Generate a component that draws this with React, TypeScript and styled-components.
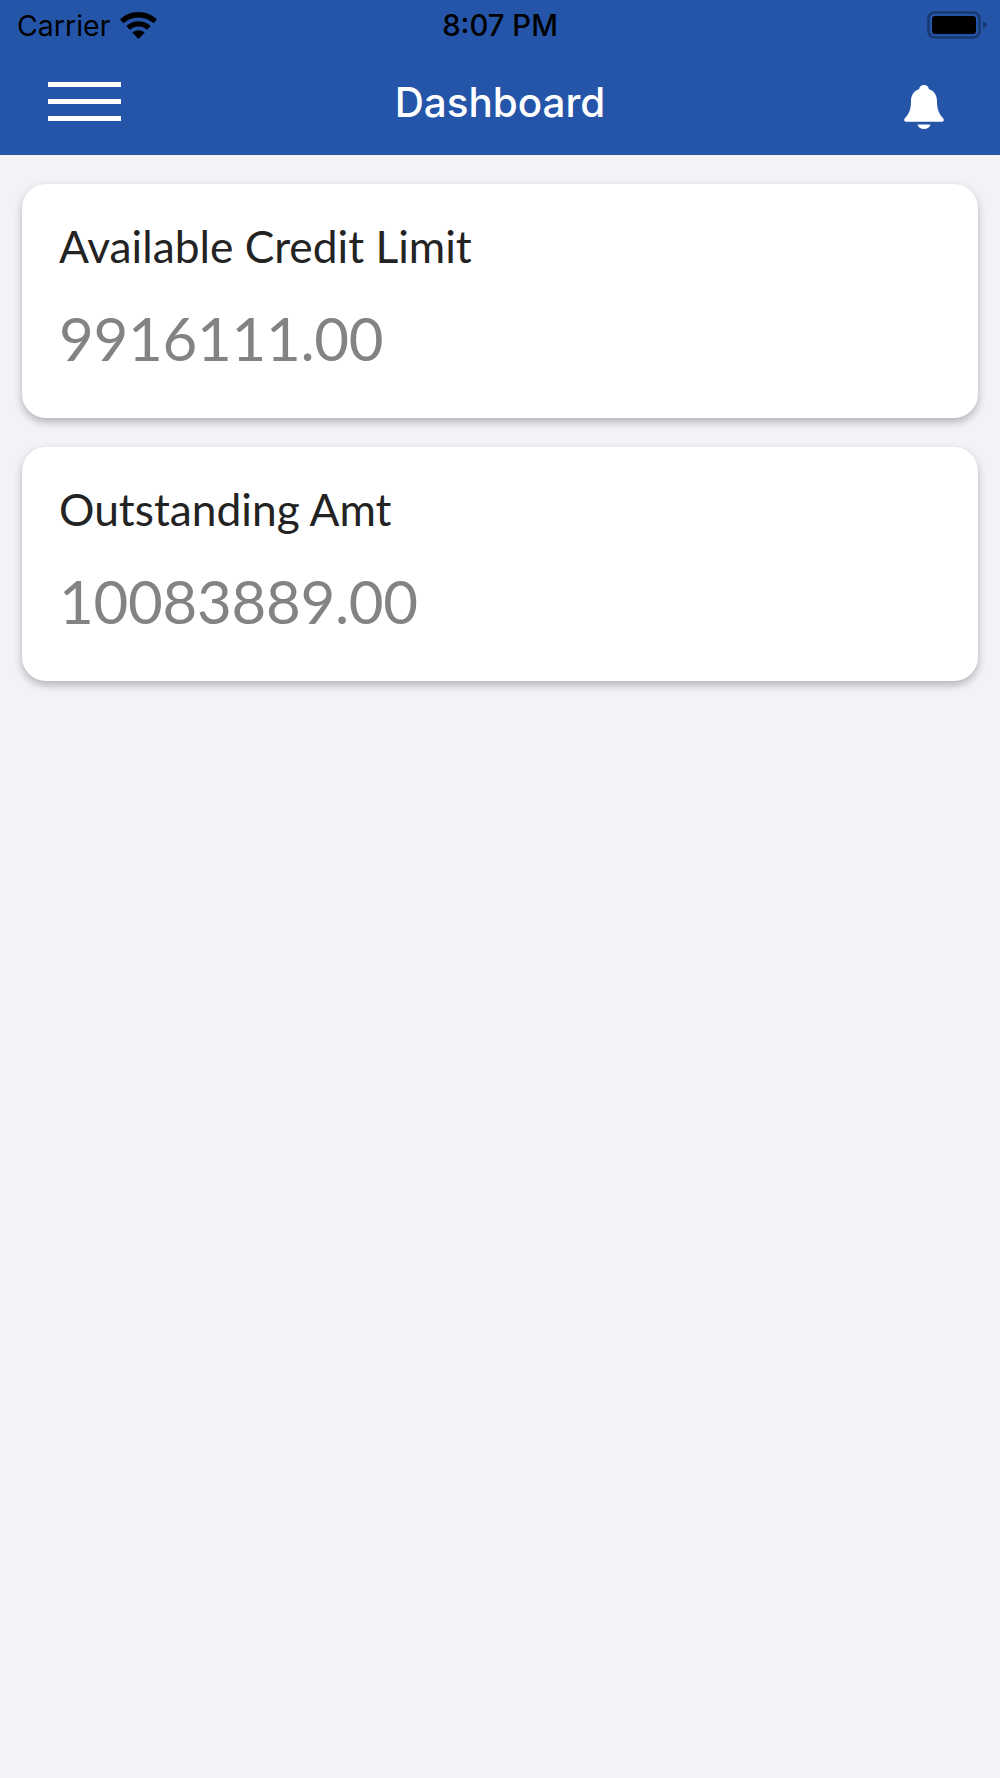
import { createGlobalStyle } from "styled-components"
import styled from "styled-components"

const GlobalStyle = createGlobalStyle`
  html, body {
    margin: 0;
    padding: 0;
    background: #f2f2f7;
  }
`;

const Page = styled.div`
  width: 1000px;
  height: 1778px;
  background: #f2f2f7;
  overflow: hidden;
`;

const Header = styled.header`
  height: 155px;
  background: #2455a9;
  display: flex;
  flex-direction: column;
`;

const StatusBar = styled.div`
  height: 50px;
  display: grid;
  grid-template-columns: 1fr auto 1fr;
  align-items: center;
  padding: 0 13px 0 17px;
  color: #000;
  font-family: Inter, "Liberation Sans", sans-serif;
`;

const Carrier = styled.div`
  display: flex;
  align-items: center;
  gap: 10px;
  font-size: 28.5px;
`;

const Clock = styled.div`
  margin-right: 4px;
  font-size: 29.3px;
  font-weight: 500;
`;

const Battery = styled.div`
  justify-self: end;
  display: flex;
`;

const NavBar = styled.div`
  flex: 1;
  display: grid;
  grid-template-columns: 1fr auto 1fr;
  align-items: center;
  padding: 0 56px 0 48px;
  margin-top: -3px;
`;

const Burger = styled.div`
  width: 73px;
  height: 39px;
  display: flex;
  flex-direction: column;
  justify-content: space-between;
`;

const BurgerLine = styled.span`
  height: 5px;
  background: #fff;
`;

const Title = styled.h1`
  margin: 2px 0 0 8px;
  color: #fff;
  font-family: Inter, "Liberation Sans", sans-serif;
  font-size: 40.4px;
  font-weight: 500;
`;

const BellSlot = styled.div`
  justify-self: end;
  display: flex;
  margin-top: 12px;
`;

const Cards = styled.main`
  display: flex;
  flex-direction: column;
  gap: 29px;
  padding: 29px 22px;
`;

const Card = styled.section`
  height: 234px;
  box-sizing: border-box;
  padding: 35px 37px 0;
  background: #fff;
  border-radius: 24px;
  box-shadow: 0 4px 8px rgba(0, 0, 0, 0.26);
  font-family: Lato, "Open Sans", sans-serif;
`;

const Label = styled.div`
  color: #232323;
  font-size: 44.3px;
  line-height: 54px;
`;

const Amount = styled.div`
  margin-top: 28px;
  color: #838383;
  font-size: 60px;
  line-height: 74px;
  letter-spacing: -0.3px;
`;

const WifiIcon = () => (
  <svg width="37" height="27" viewBox="0 0 37 27">
    <path d="M18.5 0C11.2 0 5 2.8 0 7.3l3.4 3.9C7.5 7.6 12.7 5.4 18.5 5.4s11 2.2 15.1 5.8L37 7.3C32 2.8 25.8 0 18.5 0z" fill="#000" />
    <path d="M18.5 9.2c-4.7 0-8.9 1.8-12.2 4.7l3.5 3.9c2.3-2.1 5.3-3.3 8.7-3.3s6.400 1.200 8.700 3.300l3.500-3.900c-3.300-2.900-7.500-4.700-12.200-4.700z" fill="#000" />
    <path d="M18.5 18.2c-2.4 0-4.6.9-6.2 2.4l6.2 6.4 6.2-6.4c-1.6-1.500-3.800-2.400-6.200-2.400z" fill="#000" />
  </svg>
)

const BatteryIcon = () => (
  <svg width="60" height="28" viewBox="0 0 60 28">
    <rect x="1.5" y="1.5" width="51" height="25" rx="6" fill="none" stroke="#17396f" strokeWidth="2.5" />
    <rect x="5" y="5" width="44" height="18" rx="3" fill="#000" />
    <path d="M56 10.5c2 .6 3.500 1.900 3.500 3.500s-1.500 2.900-3.500 3.500z" fill="#17396f" />
  </svg>
)

const BellIcon = () => (
  <svg width="40" height="44" viewBox="0 0 40 44">
    <path d="M20 0c-3 0-4.500 2-5 4.200C9.500 6 7 10.500 7 16.500c0 7-1.500 11.500-5.700 16.300C.2 34 0 35 .4 35.800c.3.600 1 1 1.800 1h35.600c.8 0 1.500-.4 1.800-1 .4-.8.200-1.800-.9-3C34.500 28 33 23.500 33 16.500c0-6-2.500-10.500-8-12.300C24.500 2 23 0 20 0z" fill="#fff" />
    <path d="M13.500 39.500h13C25.800 42.300 23.300 44 20 44s-5.800-1.700-6.500-4.500z" fill="#fff" />
  </svg>
)

const cards = [
  { label: "Available Credit Limit", amount: "9916111.00" },
  { label: "Outstanding Amt", amount: "10083889.00" },
]

const App = () => {
  return (
    <Page>
      <GlobalStyle />
      <Header>
        <StatusBar>
          <Carrier>
            Carrier
            <WifiIcon />
          </Carrier>
          <Clock>8:07 PM</Clock>
          <Battery>
            <BatteryIcon />
          </Battery>
        </StatusBar>
        <NavBar>
          <Burger>
            <BurgerLine />
            <BurgerLine />
            <BurgerLine />
          </Burger>
          <Title>Dashboard</Title>
          <BellSlot>
            <BellIcon />
          </BellSlot>
        </NavBar>
      </Header>
      <Cards>
        {cards.map((card) => (
          <Card key={card.label}>
            <Label>{card.label}</Label>
            <Amount>{card.amount}</Amount>
          </Card>
        ))}
      </Cards>
    </Page>
  )
}

export default App
